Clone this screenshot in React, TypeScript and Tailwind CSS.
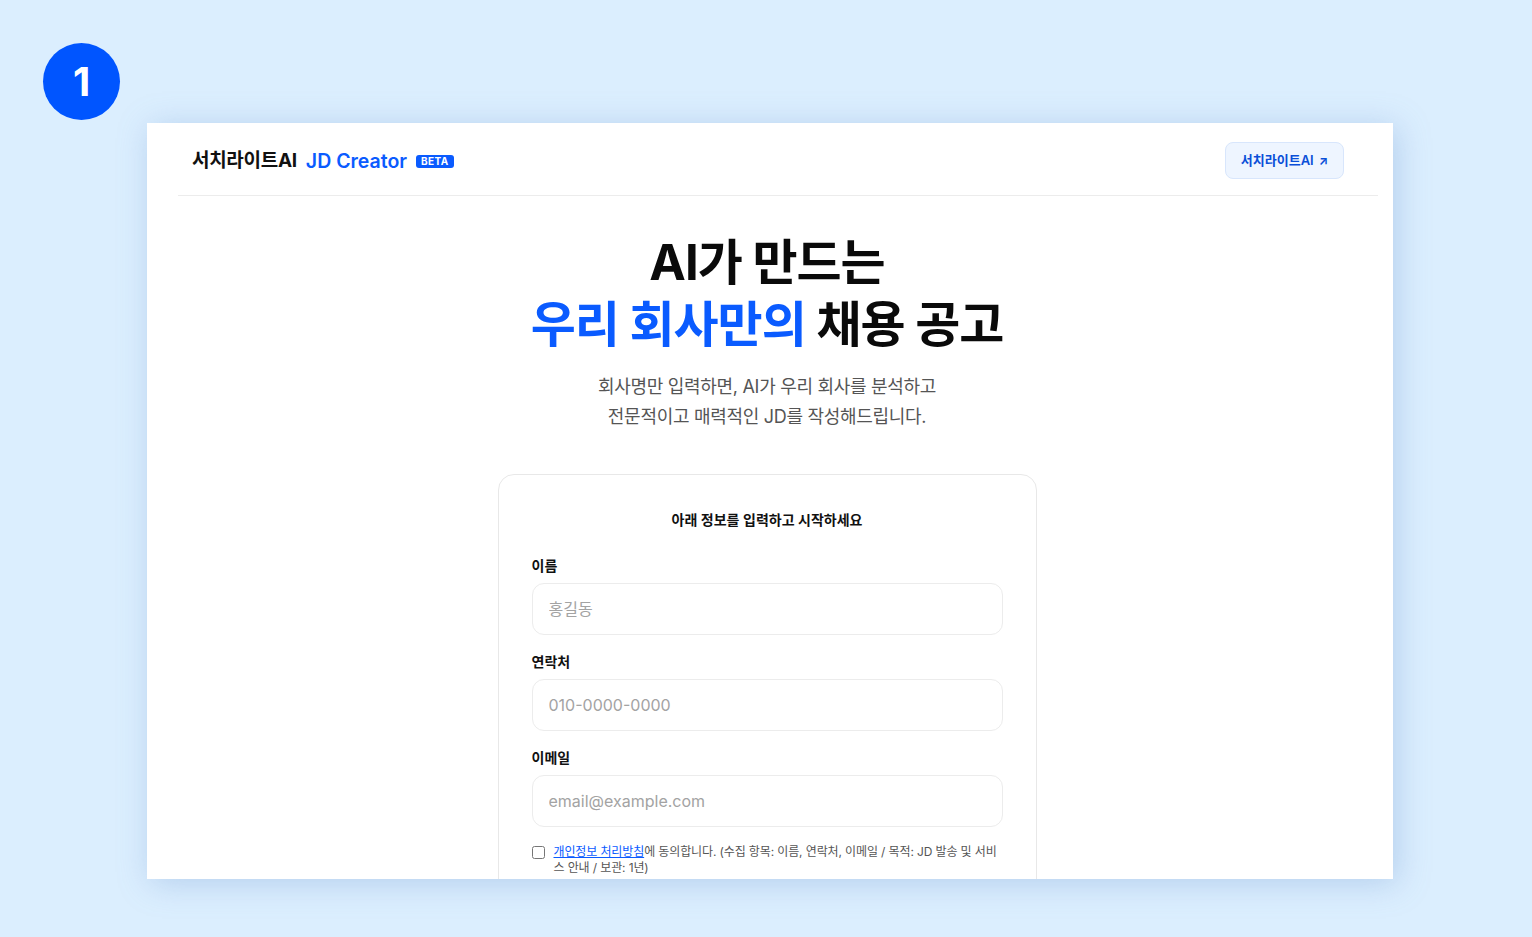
import React from "react";

const font = { fontFamily: '"Inter", "Noto Sans CJK KR", sans-serif' };

function Field({ label, placeholder }: { label: string; placeholder: string }) {
  return (
    <div className="flex flex-col">
      <label className="text-[14px] leading-[20px] font-semibold text-[#111]">{label}</label>
      <input
        className="mt-[7px] h-[52px] w-full rounded-[12px] border border-[#ececec] px-[16px] text-[16px] text-[#111] placeholder:text-[#a3a3a3] outline-none"
        placeholder={placeholder}
        style={font}
      />
    </div>
  );
}

export default function App() {
  return (
    <div className="relative w-[1532px] h-[937px] overflow-hidden bg-[#dbeefe] pl-[147px] pt-[123px]" style={font}>
      {/* step badge */}
      <div className="absolute left-[43px] top-[43px] flex h-[77px] w-[77px] items-center justify-center rounded-full bg-[#0055ff] text-[40px] font-bold text-white">
        1
      </div>

      <div className="h-[756px] w-[1246px] overflow-hidden bg-white shadow-[4px_4px_30px_rgba(110,150,205,0.35)]">
        {/* Header */}
        <div className="ml-[31px] mr-[15px] flex h-[73px] items-start justify-between border-b border-[#ececec] pt-[19px] pl-[14px] pr-[34px]">
          <div className="flex h-[37px] items-center pt-[2px]">
            <span className="text-[19px] font-bold tracking-[-0.3px] text-[#111]">서치라이트AI</span>
            <span className="ml-[9px] text-[19.5px] font-semibold text-[#0a5bff]">JD Creator</span>
            <span className="ml-[9px] rounded-[3px] bg-[#0a5bff] px-[5px] text-[10px] leading-[13px] font-bold tracking-[0.4px] text-white">
              BETA
            </span>
          </div>
          <div className="flex h-[37px] w-[119px] items-center justify-center rounded-[8px] border border-[#d8e6fc] bg-[#eef5ff] text-[13px] font-semibold text-[#0a4fd8]">
            서치라이트AI
            <span className="ml-[5px] text-[12px] font-bold">↗</span>
          </div>
        </div>

        {/* Hero */}
        <div className="flex flex-col items-center pt-[36px] pr-[6px]">
          <h1 className="text-center text-[49px] leading-[62px] font-bold tracking-[-1px] text-[#0a0a0a]">
            AI가 만드는
            <br />
            <span className="text-[#0a5bff]">우리 회사만의</span> 채용 공고
          </h1>
          <p className="mt-[16px] text-center text-[18px] leading-[30px] tracking-[-0.3px] text-[#555]">
            회사명만 입력하면, AI가 우리 회사를 분석하고
            <br />
            전문적이고 매력적인 JD를 작성해드립니다.
          </p>

          {/* Card */}
          <div className="mt-[42px] w-[539px] rounded-[16px] border border-[#e8e8e8] px-[33px] pt-[35px] pb-[30px]">
            <p className="text-center text-[14px] leading-[20px] font-semibold text-[#111]">
              아래 정보를 입력하고 시작하세요
            </p>
            <div className="mt-[26px] flex flex-col gap-[17px]">
              <Field label="이름" placeholder="홍길동" />
              <Field label="연락처" placeholder="010-0000-0000" />
              <Field label="이메일" placeholder="email@example.com" />
              <div className="flex items-start gap-[9px]">
                <input type="checkbox" className="mt-[2px] h-[13px] w-[13px] shrink-0" />
                <p className="text-[12px] leading-[16px] tracking-[-0.12px] text-[#555]">
                  <a className="text-[#0a5bff] underline">개인정보 처리방침</a>에 동의합니다. (수집 항목: 이름, 연락처, 이메일 / 목적: JD 발송 및 서비스 안내 / 보관: 1년)
                </p>
              </div>
            </div>
          </div>
        </div>
      </div>
    </div>
  );
}
